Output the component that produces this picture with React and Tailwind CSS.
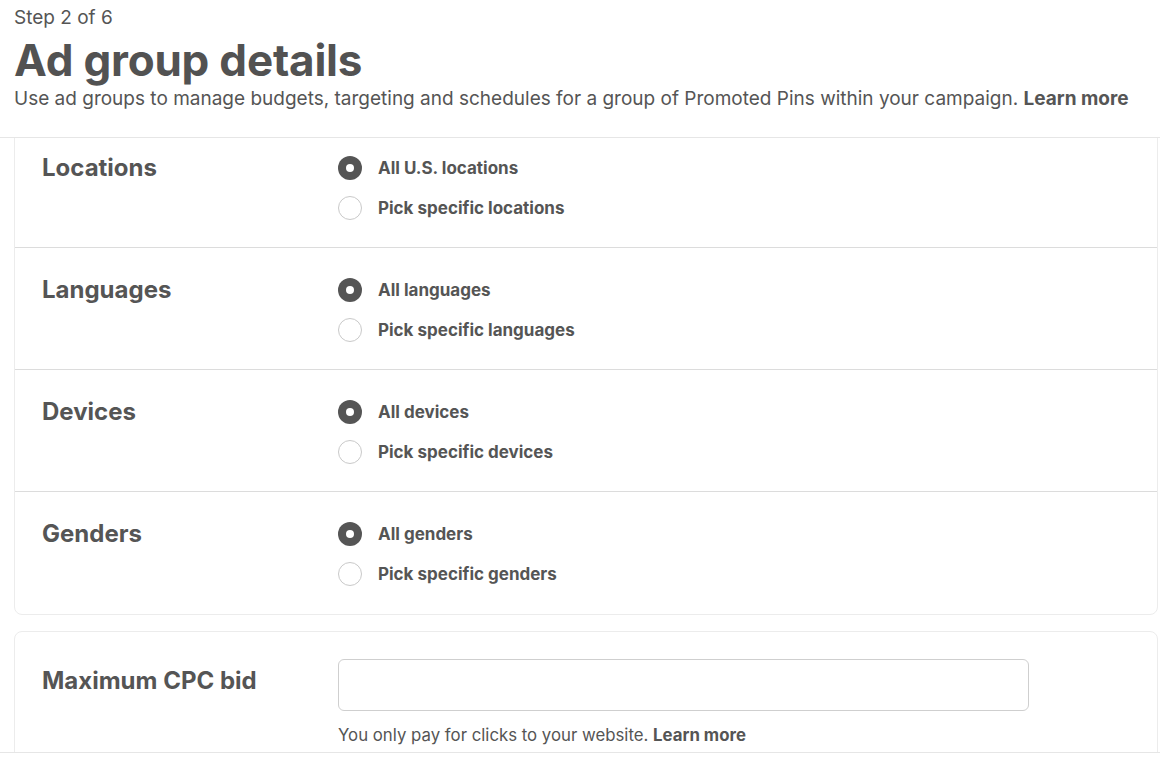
const rows = [
  { label: "Locations", all: "All U.S. locations", pick: "Pick specific locations" },
  { label: "Languages", all: "All languages", pick: "Pick specific languages" },
  { label: "Devices", all: "All devices", pick: "Pick specific devices" },
  { label: "Genders", all: "All genders", pick: "Pick specific genders" },
];

function Radio({ checked, children }) {
  return (
    <label className="flex items-center gap-4 cursor-pointer">
      {checked ? (
        <span className="w-6 h-6 rounded-full bg-[#555] flex items-center justify-center">
          <span className="w-2 h-2 rounded-full bg-white" />
        </span>
      ) : (
        <span className="w-6 h-6 rounded-full border border-[#c9c9c9] bg-white" />
      )}
      <span className="text-[17px] font-bold text-[#555] leading-6">{children}</span>
    </label>
  );
}

export default function App() {
  return (
    <div className="w-[1160px] h-[764px] bg-white text-[#555] overflow-hidden" style={{ fontFamily: "Inter, 'Liberation Sans', sans-serif" }}>
      {/* Page header */}
      <div className="px-[14px] pt-[6px] h-[137px]">
        <div className="text-[19px] leading-6">Step 2 of 6</div>
        <h1 className="mt-[4px] text-[44px] font-bold leading-[52px] tracking-[-0.2px] text-[#525252]">Ad group details</h1>
        <p className="mt-[1px] text-[19px] leading-6">
          Use ad groups to manage budgets, targeting and schedules for a group of Promoted Pins within your campaign.{" "}
          <span className="font-bold">Learn more</span>
        </p>
      </div>

      {/* Scrolling form area */}
      <div className="h-[616px] border-y border-[#e6e6e6] overflow-hidden">
        <div className="pl-[14px] pr-[2px] -mt-[13px]">
          <div className="border border-[#ececec] rounded-lg">
            {rows.map((r, i) => (
              <div
                key={r.label}
                className={`flex items-start pl-[27px] pt-[30px] pb-[27px] h-[122px] ${i < rows.length - 1 ? "border-b border-[#dcdcdc]" : ""}`}
              >
                <div className="w-[296px] text-[24px] font-bold leading-6">{r.label}</div>
                <div className="flex flex-col gap-4">
                  <Radio checked>{r.all}</Radio>
                  <Radio>{r.pick}</Radio>
                </div>
              </div>
            ))}
          </div>

          <div className="mt-4 border border-[#ececec] rounded-lg flex items-start pl-[27px] pt-[27px] pb-6">
            <div className="w-[296px] text-[24px] font-bold leading-6 mt-[10px]">Maximum CPC bid</div>
            <div>
              <input className="w-[691px] h-[52px] border border-[#cfcfcf] rounded-md px-3 outline-none" />
              <p className="mt-3 text-[16.8px] leading-6">
                You only pay for clicks to your website. <span className="font-bold">Learn more</span>
              </p>
            </div>
          </div>
        </div>
      </div>
    </div>
  );
}
